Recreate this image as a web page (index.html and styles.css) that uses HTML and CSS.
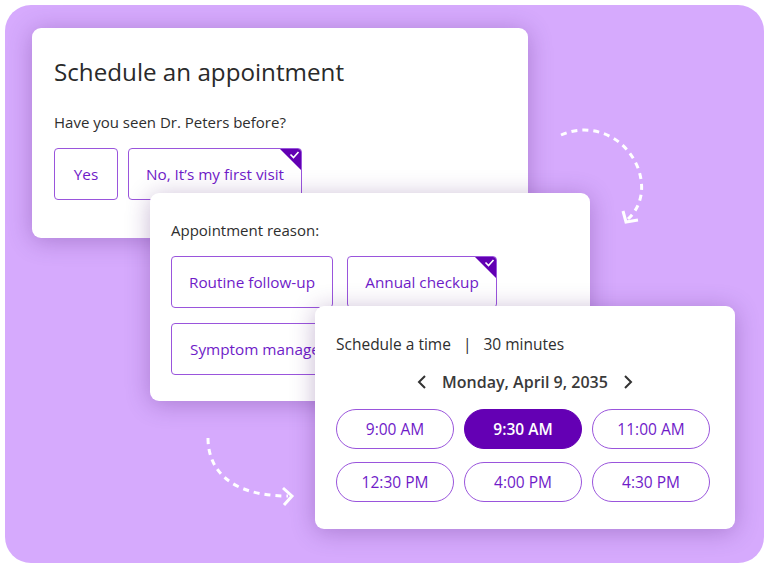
FILE: index.html
```html
<!DOCTYPE html>
<html lang="en">
<head>
<meta charset="utf-8">
<title>Schedule an appointment</title>
<link rel="stylesheet" href="styles.css">
</head>
<body>
<div class="stage">
  <div class="bg">
    <svg class="arrows" width="759" height="558" viewBox="0 0 759 558" aria-hidden="true">
      <g transform="translate(-5,-5)" fill="none" stroke="#ffffff" stroke-width="3" stroke-linecap="butt">
        <path d="M561 135 C 590 122, 625 135, 638 168 C 646 190, 640 208, 628 219" stroke-dasharray="6 5"/>
        <path d="M623 211 L626 222 L638 220" stroke-linejoin="miter"/>
        <path d="M208 438 C 208 468, 228 496, 288 496" stroke-dasharray="6 5"/>
        <path d="M283 488 L292 496 L284 505" stroke-linejoin="miter"/>
      </g>
    </svg>

    <section class="card card-one">
      <h1 class="title">Schedule an appointment</h1>
      <p class="label">Have you seen Dr. Peters before?</p>
      <div class="options">
        <button class="opt">Yes</button>
        <button class="opt selected">No, It’s my first visit
          <span class="tick"><svg width="24" height="24" viewBox="0 0 24 24"><polygon points="0,0 24,0 24,24" fill="#6200b3"/><path d="M11.5 6.5 L14.5 9.5 L19.5 4" fill="none" stroke="#fff" stroke-width="1.6"/></svg></span>
        </button>
      </div>
    </section>

    <section class="card card-two">
      <p class="label">Appointment reason:</p>
      <div class="reason-grid">
        <button class="opt reason r1">Routine follow-up</button>
        <button class="opt reason r2 selected">Annual checkup
          <span class="tick"><svg width="24" height="24" viewBox="0 0 24 24"><polygon points="0,0 24,0 24,24" fill="#6200b3"/><path d="M11.5 6.5 L14.5 9.5 L19.5 4" fill="none" stroke="#fff" stroke-width="1.6"/></svg></span>
        </button>
        <button class="opt reason r3">Symptom management</button>
      </div>
    </section>

    <section class="card card-three">
      <p class="label time-head">Schedule a time <span class="sep">|</span> 30 minutes</p>
      <div class="date-nav">
        <svg class="chev" width="12" height="16" viewBox="0 0 12 16"><path d="M9 2 L3 8 L9 14" fill="none" stroke="#333" stroke-width="2"/></svg>
        <span class="date">Monday, April 9, 2035</span>
        <svg class="chev" width="12" height="16" viewBox="0 0 12 16"><path d="M3 2 L9 8 L3 14" fill="none" stroke="#333" stroke-width="2"/></svg>
      </div>
      <div class="slots">
        <button class="pill">9:00 AM</button>
        <button class="pill active">9:30 AM</button>
        <button class="pill">11:00 AM</button>
        <button class="pill">12:30 PM</button>
        <button class="pill">4:00 PM</button>
        <button class="pill">4:30 PM</button>
      </div>
    </section>
  </div>
</div>
</body>
</html>
```

FILE: styles.css
```css
html, body {
  margin: 0;
  padding: 0;
  background: #ffffff;
}

body {
  font-family: "Open Sans", "Noto Sans", sans-serif;
  color: #2e2e2e;
}

.stage {
  width: 767px;
  height: 565px;
  padding: 5px 3px 2px 5px;
  box-sizing: border-box;
}

.bg {
  position: relative;
  width: 759px;
  height: 558px;
  background: #d6aafd;
  border-radius: 26px;
  overflow: hidden;
}

.arrows {
  position: absolute;
  left: 0;
  top: 0;
}

.card {
  position: absolute;
  background: #ffffff;
  border-radius: 9px;
  box-sizing: border-box;
  box-shadow: 0 3px 24px rgba(70, 20, 110, 0.3);
}

.card-one {
  left: 27px;
  top: 23px;
  width: 496px;
  height: 210px;
  padding: 28px 22px 0 22px;
}

.card-two {
  left: 145px;
  top: 188px;
  width: 440px;
  height: 208px;
  padding: 26px 21px 0 21px;
}

.card-three {
  left: 310px;
  top: 301px;
  width: 420px;
  height: 223px;
  padding: 26px 21px 0 21px;
}

.title {
  margin: 0;
  font-size: 24.2px;
  font-weight: 400;
  line-height: 32px;
  color: #2a2a2a;
}

.label {
  margin: 0;
  font-size: 15px;
  line-height: 22px;
  color: #2e2e2e;
}

.card-one .label {
  margin-top: 23px;
}

.options {
  display: flex;
  gap: 10px;
  margin-top: 15px;
}

.opt {
  position: relative;
  height: 52px;
  box-sizing: border-box;
  border: 1.5px solid #9a55dc;
  border-radius: 4px;
  background: #ffffff;
  color: #6f1bc8;
  font-family: "Open Sans", "Noto Sans", sans-serif;
  font-size: 15.3px;
  padding: 0 18px;
  overflow: hidden;
  white-space: nowrap;
  text-align: center;
}

.options .opt:first-child {
  width: 64px;
  padding: 0;
}

.options .opt.selected {
  width: 174px;
  padding: 0;
}

.tick {
  position: absolute;
  top: -1.5px;
  right: -1.5px;
  width: 24px;
  height: 24px;
  line-height: 0;
}

.reason-grid {
  display: grid;
  grid-template-columns: 162px 150px;
  column-gap: 14px;
  row-gap: 15px;
  margin-top: 15px;
}

.reason.r1, .reason.r2 {
  width: 100%;
  padding: 0;
}

.reason.r3 {
  width: 220px;
  padding: 0 0 0 18px;
  text-align: left;
}

.time-head {
  font-size: 15.5px;
  line-height: 24px;
}

.sep {
  margin: 0 8px;
}

.date-nav {
  display: flex;
  align-items: center;
  justify-content: center;
  gap: 14px;
  margin-top: 14px;
  height: 24px;
}

.date {
  font-size: 16px;
  font-weight: 600;
  color: #3a3a3a;
}

.chev {
  display: block;
}

.slots {
  display: grid;
  grid-template-columns: repeat(3, 118px);
  column-gap: 10px;
  row-gap: 13px;
  margin-top: 15px;
}

.pill {
  height: 40px;
  box-sizing: border-box;
  border: 1.5px solid #9a55dc;
  border-radius: 20px;
  background: #ffffff;
  color: #6f1bc8;
  font-family: "Open Sans", "Noto Sans", sans-serif;
  font-size: 15.5px;
  padding: 0;
}

.pill.active {
  background: #6400b4;
  border-color: #6400b4;
  color: #ffffff;
  font-weight: 600;
}
```
